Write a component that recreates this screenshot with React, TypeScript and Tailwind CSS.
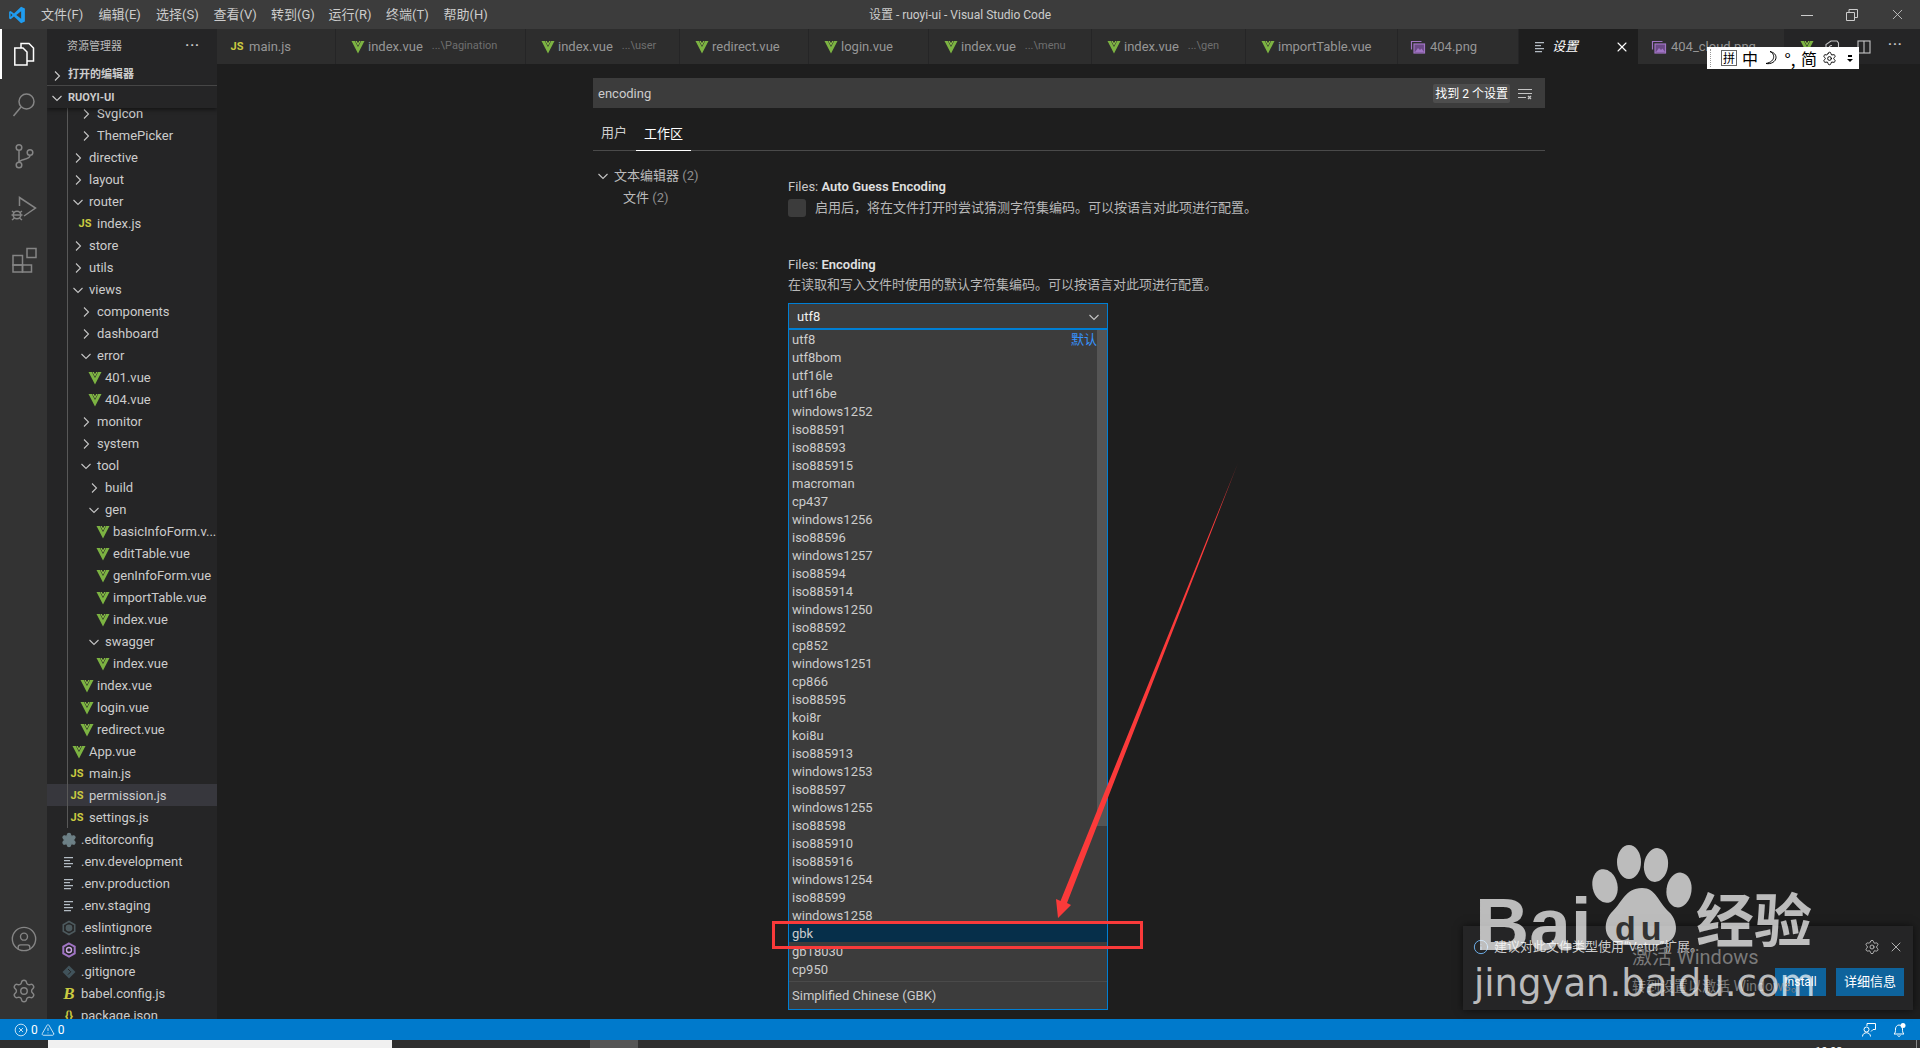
import { CircleUser, CircleX, Info, Settings, TriangleAlert, X } from "lucide-react";

type Kind = "open" | "closed" | "vue" | "js" | "lines" | "gear" | "eslintignore" | "eslint" | "git" | "babel" | "json";

const indent: Record<number, string> = {
  0: "pl-[14px]",
  1: "pl-[22px]",
  2: "pl-[30px]",
  3: "pl-[38px]",
  4: "pl-[46px]",
};

const tree: { name: string; level: number; kind: Kind; active?: boolean }[] = [
  { name: "SvgIcon", level: 2, kind: "closed" },
  { name: "ThemePicker", level: 2, kind: "closed" },
  { name: "directive", level: 1, kind: "closed" },
  { name: "layout", level: 1, kind: "closed" },
  { name: "router", level: 1, kind: "open" },
  { name: "index.js", level: 2, kind: "js" },
  { name: "store", level: 1, kind: "closed" },
  { name: "utils", level: 1, kind: "closed" },
  { name: "views", level: 1, kind: "open" },
  { name: "components", level: 2, kind: "closed" },
  { name: "dashboard", level: 2, kind: "closed" },
  { name: "error", level: 2, kind: "open" },
  { name: "401.vue", level: 3, kind: "vue" },
  { name: "404.vue", level: 3, kind: "vue" },
  { name: "monitor", level: 2, kind: "closed" },
  { name: "system", level: 2, kind: "closed" },
  { name: "tool", level: 2, kind: "open" },
  { name: "build", level: 3, kind: "closed" },
  { name: "gen", level: 3, kind: "open" },
  { name: "basicInfoForm.v...", level: 4, kind: "vue" },
  { name: "editTable.vue", level: 4, kind: "vue" },
  { name: "genInfoForm.vue", level: 4, kind: "vue" },
  { name: "importTable.vue", level: 4, kind: "vue" },
  { name: "index.vue", level: 4, kind: "vue" },
  { name: "swagger", level: 3, kind: "open" },
  { name: "index.vue", level: 4, kind: "vue" },
  { name: "index.vue", level: 2, kind: "vue" },
  { name: "login.vue", level: 2, kind: "vue" },
  { name: "redirect.vue", level: 2, kind: "vue" },
  { name: "App.vue", level: 1, kind: "vue" },
  { name: "main.js", level: 1, kind: "js" },
  { name: "permission.js", level: 1, kind: "js", active: true },
  { name: "settings.js", level: 1, kind: "js" },
  { name: ".editorconfig", level: 0, kind: "gear" },
  { name: ".env.development", level: 0, kind: "lines" },
  { name: ".env.production", level: 0, kind: "lines" },
  { name: ".env.staging", level: 0, kind: "lines" },
  { name: ".eslintignore", level: 0, kind: "eslintignore" },
  { name: ".eslintrc.js", level: 0, kind: "eslint" },
  { name: ".gitignore", level: 0, kind: "git" },
  { name: "babel.config.js", level: 0, kind: "babel" },
  { name: "package.json", level: 0, kind: "json" },
];

const tabs: { name: string; desc?: string; icon: Kind | "image"; width: string }[] = [
  { name: "main.js", icon: "js", width: "w-[119px]" },
  { name: "index.vue", desc: "...\\Pagination", icon: "vue", width: "w-[190px]" },
  { name: "index.vue", desc: "...\\user", icon: "vue", width: "w-[154px]" },
  { name: "redirect.vue", icon: "vue", width: "w-[129px]" },
  { name: "login.vue", icon: "vue", width: "w-[120px]" },
  { name: "index.vue", desc: "...\\menu", icon: "vue", width: "w-[163px]" },
  { name: "index.vue", desc: "...\\gen", icon: "vue", width: "w-[154px]" },
  { name: "importTable.vue", icon: "vue", width: "w-[152px]" },
  { name: "404.png", icon: "image", width: "w-[121px]" },
];

const encodings = [
  "utf8", "utf8bom", "utf16le", "utf16be", "windows1252", "iso88591", "iso88593", "iso885915", "macroman",
  "cp437", "windows1256", "iso88596", "windows1257", "iso88594", "iso885914", "windows1250", "iso88592", "cp852",
  "windows1251", "cp866", "iso88595", "koi8r", "koi8u", "iso885913", "windows1253", "iso88597", "windows1255",
  "iso88598", "iso885910", "iso885916", "windows1254", "iso88599", "windows1258", "gbk", "gb18030", "cp950",
];

const menus = ["文件(F)", "编辑(E)", "选择(S)", "查看(V)", "转到(G)", "运行(R)", "终端(T)", "帮助(H)"];

function Chevron({ open, className = "" }: { open?: boolean; className?: string }) {
  return (
    <svg className={`w-4 h-4 shrink-0 ${className}`} viewBox="0 0 16 16" fill="none" stroke="currentColor" strokeWidth="1.1">
      {open ? <path d="M3.5 6l4.5 4.5L12.5 6" /> : <path d="M6 3.5l4.5 4.5L6 12.5" />}
    </svg>
  );
}

function VueIcon() {
  return (
    <svg className="w-4 h-4 shrink-0 overflow-visible" viewBox="-1.500 0 16 16">
      <path d="M2 2h3.4L8.500 8 11.600 2H15L8.500 14.500z" fill="#7cb342" />
      <path d="M5.900 2h1.400l1.200 2.200L9.700 2h1.400L8.500 6.800z" fill="#8dc149" />
    </svg>
  );
}

function LinesIcon({ className = "text-[#b4bcc4]" }: { className?: string }) {
  return (
    <svg className={`w-4 h-4 shrink-0 ${className}`} viewBox="0 0 16 16" fill="currentColor">
      <path d="M3 3h9v1.300H3zM3 6h6v1.300H3zM3 9h9v1.300H3zM3 12h7v1.300H3z" />
    </svg>
  );
}

function ImageIcon() {
  return (
    <svg className="w-4 h-4 shrink-0" viewBox="0 0 16 16" fill="none" stroke="#a074c4" strokeWidth="1.200">
      <path d="M1.500 10.500V2.500h10" />
      <rect x="4" y="5" width="10.500" height="9" fill="#6b4a85" />
      <path d="M5 13l3-4 2 2 1.500-1.500L14 13z" fill="#a074c4" stroke="none" />
    </svg>
  );
}

function FileIcon({ kind }: { kind: Kind | "image" }) {
  switch (kind) {
    case "open":
      return <Chevron open className="text-[#c5c5c5] translate-x-[1px]" />;
    case "closed":
      return <Chevron className="text-[#c5c5c5] translate-x-[1px]" />;
    case "vue":
      return <VueIcon />;
    case "image":
      return <ImageIcon />;
    case "js":
      return <span className="w-4 shrink-0 text-center text-[11px] font-bold leading-4 text-[#cbcb41]">JS</span>;
    case "lines":
      return <LinesIcon />;
    case "gear":
      return <Settings className="w-4 h-4 shrink-0 text-[#6d8086]" fill="#6d8086" strokeWidth={2} />;
    case "eslintignore":
      return (
        <svg className="w-4 h-4 shrink-0" viewBox="0 0 16 16" fill="none" stroke="#4d5a5e" strokeWidth="1.600">
          <path d="M8 1.500l5.700 3.200v6.600L8 14.500l-5.700-3.200V4.700z" />
          <circle cx="8" cy="8" r="2.600" fill="#4d5a5e" />
        </svg>
      );
    case "eslint":
      return (
        <svg className="w-4 h-4 shrink-0" viewBox="0 0 16 16" fill="none" stroke="#a074c4" strokeWidth="2">
          <path d="M8 1.500l5.700 3.200v6.600L8 14.500l-5.700-3.200V4.700z" />
          <circle cx="8" cy="8" r="2.500" stroke="#c9a8e0" strokeWidth="1.400" />
        </svg>
      );
    case "git":
      return (
        <svg className="w-4 h-4 shrink-0" viewBox="0 0 16 16" fill="#41535b">
          <path d="M8 1.500L14.500 8 8 14.500 1.500 8z" />
          <path d="M7 5l2.800 2.800L7 10.600" stroke="#252526" fill="none" />
        </svg>
      );
    case "babel":
      return <span className="w-4 shrink-0 text-center font-['Liberation_Serif',serif] text-[17px] font-bold italic leading-4 text-[#cbcb41]">B</span>;
    case "json":
      return <span className="w-4 shrink-0 text-center text-[12px] font-bold leading-4 text-[#cbcb41]">{"{}"}</span>;
  }
}

function TreeRow({ row }: { row: (typeof tree)[number] }) {
  return (
    <div className={`h-[22px] shrink-0 pt-[2px] flex items-center gap-1 text-[13px] text-[#cccccc] whitespace-nowrap ${indent[row.level]} ${row.active ? "bg-[#37373d]" : ""}`}>
      <FileIcon kind={row.kind} />
      <span>{row.name}</span>
    </div>
  );
}

function ActivityBar() {
  return (
    <div className="w-[47px] shrink-0 bg-[#333333] flex flex-col text-[#858585]">
      <div className="h-[50px] border-l-2 border-white flex items-center justify-center text-white pr-[1px] -mb-[1px]">
        <svg className="w-6 h-6" viewBox="0 0 24 24" fill="none" stroke="currentColor" strokeWidth="1.500">
          <path d="M9 6V1.500h8L21.500 6v13H15" />
          <path d="M2.800 6H11l4 4v13H2.800z" />
        </svg>
      </div>
      <div className="h-[52px] flex items-center justify-center pt-[1px]">
        <svg className="w-7 h-7" viewBox="0 0 28 28" fill="none" stroke="currentColor" strokeWidth="1.500">
          <circle cx="16.500" cy="10.500" r="7.500" />
          <path d="M11 16L3.500 25" />
        </svg>
      </div>
      <div className="h-[52px] flex items-center justify-center">
        <svg className="w-7 h-7" viewBox="0 0 28 28" fill="none" stroke="currentColor" strokeWidth="1.500">
          <circle cx="9" cy="5.500" r="2.800" />
          <circle cx="9" cy="23" r="2.800" />
          <circle cx="20" cy="10.500" r="2.800" />
          <path d="M9 8.500v11.500M20 13.500c0 4.500-11 3.500-11 7" />
        </svg>
      </div>
      <div className="h-[52px] flex items-center justify-center pt-[1px]">
        <svg className="w-7 h-7" viewBox="0 0 28 28" fill="none" stroke="currentColor" strokeWidth="1.500">
          <path d="M9.500 11V2.500L25.500 13l-11.500 8" />
          <circle cx="7" cy="20" r="3.800" />
          <path d="M2 16l2.500 2M12 16l-2.500 2M1.500 20h2M10.500 20h2M2 25l2.500-2M12 25l-2.500-2M3.500 20h7" />
        </svg>
      </div>
      <div className="h-[52px] flex items-center justify-center">
        <svg className="w-7 h-7" viewBox="0 0 28 28" fill="none" stroke="currentColor" strokeWidth="1.500">
          <rect x="3" y="9.500" width="9.500" height="9.500" />
          <rect x="3" y="19" width="9.500" height="7" />
          <rect x="12.500" y="19" width="9" height="7" />
          <rect x="17" y="2.500" width="9" height="9" />
        </svg>
      </div>
      <div className="mt-auto flex flex-col items-center gap-[25px] pb-[15px]">
        <CircleUser className="w-[28px] h-[28px]" strokeWidth={1.200} />
        <Settings className="w-[26px] h-[26px]" strokeWidth={1.300} />
      </div>
    </div>
  );
}

function Sidebar() {
  return (
    <div className="relative w-[170px] shrink-0 bg-[#252526] flex flex-col overflow-hidden">
      <div className="h-[35px] shrink-0 pt-[2px] pl-[20px] pr-[17px] flex items-center justify-between text-[11px] text-[#bbbbbb]">
        <span>资源管理器</span>
        <span className="text-[13px] font-bold tracking-[1px] -mt-[6px] text-[#cccccc]">···</span>
      </div>
      <div className="h-[22px] shrink-0 pt-[2px] flex items-center gap-[3px] pl-[2px] text-[11px] font-bold text-[#cccccc] border-b border-[#4a4a4a]">
        <Chevron />
        <span>打开的编辑器</span>
      </div>
      <div className="relative z-10 h-[22px] shrink-0 pt-[2px] flex items-center gap-[3px] pl-[2px] text-[11px] font-bold text-[#cccccc] bg-[#252526] shadow-[0_2px_4px_rgba(0,0,0,0.45)]">
        <Chevron open />
        <span>RUOYI-UI</span>
      </div>
      <div className="-mt-[6px] flex flex-col">
        {tree.map((row, i) => (
          <TreeRow key={i} row={row} />
        ))}
      </div>
      <div className="absolute left-[20px] top-[79px] h-[720px] w-px bg-[#585858]" />
    </div>
  );
}

function Tab({ tab }: { tab: (typeof tabs)[number] }) {
  return (
    <div className={`${tab.width} shrink-0 h-full bg-[#2d2d2d] border-r border-[#252526] pl-[12px] flex items-center gap-1 text-[13px] text-[#969696] whitespace-nowrap`}>
      <FileIcon kind={tab.icon} />
      <span>{tab.name}</span>
      {tab.desc && <span className="ml-[5px] text-[11px] text-[#6f6f6f]">{tab.desc}</span>}
    </div>
  );
}

function TabBar() {
  return (
    <div className="h-[35px] shrink-0 flex bg-[#252526]">
      {tabs.map((t, i) => (
        <Tab key={i} tab={t} />
      ))}
      <div className="w-[119px] shrink-0 h-full bg-[#1e1e1e] pl-[13px] pr-[8px] flex items-center gap-1 text-[13px] text-white">
        <LinesIcon className="text-[#b4bcc4]" />
        <span className="italic">设置</span>
        <X className="ml-auto w-4 h-4" strokeWidth={1.600} />
      </div>
      <div className="w-[146px] shrink-0 h-full bg-[#2d2d2d] pl-[13px] flex items-center gap-1 text-[13px] text-[#969696] whitespace-nowrap">
        <ImageIcon />
        <span>404_cloud.png</span>
      </div>
      <div className="flex-1 flex items-center pl-[13px] text-[#c5c5c5]">
        <VueIcon />
        <svg className="ml-[11px] w-4 h-4 shrink-0" viewBox="0 0 16 16" fill="none" stroke="currentColor" strokeWidth="1.100">
          <path d="M2 12V5.500L7 2h6l1.500 2v8z" />
          <path d="M8 6.500a3 3 0 1 0 2 5" />
        </svg>
        <svg className="ml-[16px] w-4 h-4 shrink-0" viewBox="0 0 16 16" fill="none" stroke="currentColor" strokeWidth="1.100">
          <rect x="2" y="2" width="12" height="12" />
          <path d="M8 2v12" />
        </svg>
        <span className="ml-[16px] text-[13px] font-bold tracking-[1px] -mt-[6px]">···</span>
      </div>
    </div>
  );
}

function SettingsPane() {
  return (
    <div className="flex-1 bg-[#1e1e1e] pl-[376px] pr-[375px] pt-[14px] min-h-0">
      <div className="h-[30px] bg-[#3c3c3c] pl-[5px] pr-[12px] pt-[1px] flex items-center text-[13px] text-[#cccccc]">
        <span>encoding</span>
        <span className="ml-auto h-[19px] px-[2px] rounded-[2px] bg-[#4d4d4d] flex items-center text-[12px] text-white">找到 2 个设置</span>
        <svg className="ml-[7px] w-4 h-4 text-[#c5c5c5]" viewBox="0 0 16 16" fill="none" stroke="currentColor" strokeWidth="1">
          <path d="M1 3.500h14M1 7.500h14M1 11.500h8" />
          <path d="M11 10l3 3M14 10l-3 3" strokeWidth="1.300" />
        </svg>
      </div>
      <div className="h-[43px] border-b border-[#4a4a4a] flex items-end text-[13px]">
        <span className="pl-[8px] pr-[9px] h-[27px] text-[#d0d0d0]">用户</span>
        <span className="px-[6px] h-[27px] ml-0 text-white border-b-[1px] border-white w-[55px] text-center -mb-[1px]">工作区</span>
      </div>
      <div className="flex">
        <div className="w-[195px] shrink-0 pt-[14px] text-[13px] text-[#bbbbbb]">
          <div className="h-[22px] flex items-center gap-[3px] pl-[2px]">
            <Chevron open className="text-[#c5c5c5]" />
            <span>文本编辑器 <span className="text-[#8f8f8f]">(2)</span></span>
          </div>
          <div className="h-[22px] flex items-center pl-[30px]">
            <span>文件 <span className="text-[#8f8f8f]">(2)</span></span>
          </div>
        </div>
        <div className="flex-1 pt-[26px]">
          <div className="h-[20px] flex items-center text-[13px] text-[#c8c8c8]">
            <span>Files:&nbsp;</span>
            <span className="font-semibold text-[#e0e0e0]">Auto Guess Encoding</span>
          </div>
          <div className="mt-[2px] h-[18px] flex items-center gap-[9px] text-[13px] text-[#b8b8b8]">
            <span className="w-[18px] h-[18px] rounded-[3px] bg-[#3c3c3c]" />
            <span>启用后，将在文件打开时尝试猜测字符集编码。可以按语言对此项进行配置。</span>
          </div>
          <div className="mt-[37px] h-[20px] pt-[1px] flex items-center text-[13px] text-[#c8c8c8]">
            <span>Files:&nbsp;</span>
            <span className="font-semibold text-[#e0e0e0]">Encoding</span>
          </div>
          <div className="mt-[1px] h-[20px] flex items-center text-[13px] text-[#b8b8b8]">
            在读取和写入文件时使用的默认字符集编码。可以按语言对此项进行配置。
          </div>
          <div className="mt-[8px] w-[320px]">
            <div className="h-[27px] pt-[1px] bg-[#3c3c3c] border border-b-2 border-[#007fd4] pl-[8px] pr-[5px] flex items-center justify-between text-[13px] text-[#f0f0f0]">
              <span>utf8</span>
              <Chevron open className="text-[#c5c5c5]" />
            </div>
            <div className="relative bg-[#3c3c3c] border border-t-0 border-[#007fd4] text-[13px] text-[#cccccc]">
              <div className="absolute right-0 top-0 h-[496px] w-[10px] bg-[#555555]" />
              <div className="flex flex-col">
                {encodings.map((e, i) => (
                  <div key={e} className={`h-[18px] pt-[2px] pl-[3px] pr-[10px] flex items-center justify-between ${e === "gbk" ? "relative bg-[#062f4a]" : ""}`}>
                    <span>{e}</span>
                    {i === 0 && <span className="relative text-[#3794ff]">默认</span>}
                  </div>
                ))}
              </div>
              <div className="mt-[3px] h-[28px] border-t border-[#4a4a4a] pl-[3px] flex items-center">Simplified Chinese (GBK)</div>
            </div>
          </div>
        </div>
      </div>
    </div>
  );
}

function Notification() {
  return (
    <div className="absolute left-[1463px] top-[926px] w-[450px] h-[84px] bg-[#252526] shadow-[0_0_8px_rgba(0,0,0,0.6)] pl-[10px] pr-[9px] pt-[10px] text-[13px] text-[#cccccc]">
      <div className="h-[22px] flex items-center gap-[5px]">
        <Info className="w-4 h-4 text-[#75beff]" strokeWidth={1.300} />
        <span>建议对此文件类型使用“Vetur”扩展。</span>
        <Settings className="ml-auto w-4 h-4 text-[#c5c5c5]" strokeWidth={1.300} />
        <X className="ml-[3px] w-4 h-4 text-[#c5c5c5]" strokeWidth={1.300} />
      </div>
      <div className="mt-[10px] h-[28px] flex justify-end gap-[10px] text-white">
        <span className="w-[51px] bg-[#0e639c] flex items-center justify-center text-[12px]">Install</span>
        <span className="w-[68px] bg-[#0e639c] flex items-center justify-center">详细信息</span>
      </div>
    </div>
  );
}

function Annotation() {
  return (
    <>
      <div className="absolute left-[772px] top-[921px] w-[371px] h-[28px] border-[3px] border-[#f93a3a]" />
      <svg className="absolute left-[1050px] top-[460px] w-[195px] h-[465px]" viewBox="1050 460 195 465">
        <defs>
          <linearGradient id="tail" x1="1238" y1="463" x2="1058" y2="918" gradientUnits="userSpaceOnUse">
            <stop offset="0" stopColor="#f93a3a" stopOpacity="0.5" />
            <stop offset="0.12" stopColor="#fb3a3a" />
          </linearGradient>
        </defs>
        <path d="M1238 463L1067 903L1071 905L1058 918L1056 899L1060.500 901z" fill="url(#tail)" />
      </svg>
    </>
  );
}

function ActivationText() {
  return (
    <div className="absolute left-[1632px] top-[942px] text-[#7a7a7a] whitespace-nowrap">
      <div className="text-[20px] leading-[30px]">激活 Windows</div>
      <div className="text-[14px] leading-[20px] mt-[4px]">转到设置以激活 Windows。</div>
    </div>
  );
}

function Watermark() {
  return (
    <div className="absolute inset-0 pointer-events-none text-white/70">
      <span className="absolute left-[1475px] top-[878px] text-[75px] leading-[92px] font-bold font-['Liberation_Sans',sans-serif]">Bai</span>
      <svg className="absolute left-[1585px] top-[840px] w-[110px] h-[110px]" viewBox="0 0 110 110" fill="currentColor">
        <ellipse cx="20" cy="46" rx="12.500" ry="17" transform="rotate(-12 20 46)" />
        <ellipse cx="44" cy="22" rx="12" ry="17" />
        <ellipse cx="71" cy="25" rx="12" ry="17" transform="rotate(8 71 25)" />
        <ellipse cx="94" cy="50" rx="12.500" ry="17.500" transform="rotate(8 94 50)" />
        <path d="M57 48c14 0 16 14 27 24 10 9 12 32-12 33H40c-20-1-24-20-14-32 11-10 14-25 31-25z" />
      </svg>
      <span className="absolute left-[1615px] top-[902px] text-[34px] tracking-[5px] leading-[52px] font-bold font-['Liberation_Sans',sans-serif] text-[#333333]">du</span>
      <span className="absolute left-[1696px] top-[880px] text-[58px] leading-[84px] font-bold">经验</span>
      <span className="absolute left-[1474px] top-[959px] text-[37px] leading-[50px] font-['DejaVu_Sans',sans-serif] whitespace-nowrap">jingyan.baidu.com</span>
    </div>
  );
}

function ImeBar() {
  return (
    <div className="absolute left-[1707px] top-[47px] w-[152px] h-[22px] bg-white text-black flex items-center pl-[3px] text-[16px] font-['Noto_Sans_CJK_SC',sans-serif]">
      <span className="h-[18px] border-l border-dotted border-[#999]" />
      <span className="ml-[10px] w-[16px] h-[16px] border border-[#666] flex items-center justify-center text-[12px] leading-none">拼</span>
      <span className="ml-[5px] leading-none">中</span>
      <svg className="ml-[6px] w-[14px] h-[16px]" viewBox="0 0 14 16" fill="none" stroke="currentColor" strokeWidth="1">
        <path d="M6 1.500c5 2 6 10 -4 12 5 1 10-2 10-6 0-3-2-5-6-6z" />
      </svg>
      <span className="ml-[4px] w-[16px] text-center text-[17px] leading-none">°,</span>
      <span className="ml-[3px] leading-none">简</span>
      <Settings className="ml-[5px] w-[15px] h-[15px]" strokeWidth={1.500} />
      <span className="ml-[10px] flex flex-col items-center gap-[2px]">
        <span className="block w-[4px] h-[2px] bg-black" />
        <span className="block border-x-[3px] border-t-[3px] border-x-transparent border-t-black" />
      </span>
    </div>
  );
}

export default function App() {
  return (
    <div className="relative w-[1920px] h-[1048px] overflow-hidden flex flex-col bg-[#1e1e1e] font-['Roboto','Noto_Sans_CJK_SC',sans-serif]">
      <div className="relative h-[29px] shrink-0 bg-[#3c3c3c] flex items-center text-[13px] text-[#cccccc]">
        <svg className="ml-[8px] w-[18px] h-[18px]" viewBox="0 0 24 24">
          <path d="M17.500 1L8 10 3.500 6.500 1.500 7.500v9l2 1L8 14l9.500 9 5-2.400V3.400z" fill="#1f9cf0" />
          <path d="M17.500 7L11 12l6.500 5z" fill="#3c3c3c" />
          <path d="M3.500 9.500v5L6 12z" fill="#3c3c3c" />
        </svg>
        <div className="ml-[15px] flex">
          {menus.map((m) => (
            <span key={m} className="w-[57.500px] whitespace-nowrap">{m}</span>
          ))}
        </div>
        <span className="absolute left-1/2 -translate-x-1/2 text-[12px]">设置 - ruoyi-ui - Visual Studio Code</span>
        <div className="ml-auto flex items-center gap-[29px] pr-[14px] text-[#cccccc]">
          <svg className="w-4 h-4" viewBox="0 0 16 16" stroke="currentColor"><path d="M2 8.500h12" /></svg>
          <svg className="w-4 h-4" viewBox="0 0 16 16" fill="none" stroke="currentColor"><path d="M2.500 5.500h8v8h-8zM5 5.500v-3h8.500v8h-3" /></svg>
          <X className="w-[17px] h-[17px]" strokeWidth={1.200} />
        </div>
      </div>

      <div className="flex-1 flex min-h-0">
        <ActivityBar />
        <Sidebar />
        <div className="flex-1 flex flex-col min-w-0">
          <TabBar />
          <SettingsPane />
        </div>
      </div>

      <div className="h-[21px] shrink-0 bg-[#007acc] flex items-center text-white text-[12px] pl-[14px]">
        <CircleX className="w-[14px] h-[14px]" strokeWidth={1.300} />
        <span className="ml-[3px]">0</span>
        <TriangleAlert className="ml-[3px] w-[14px] h-[14px]" strokeWidth={1.300} />
        <span className="ml-[3px]">0</span>
        <svg className="ml-auto w-4 h-4" viewBox="0 0 16 16" fill="none" stroke="currentColor">
          <path d="M6 4V1.500h8.500v6H12L10 9.500" />
          <circle cx="5.500" cy="7.500" r="2.500" />
          <path d="M1.500 14.500c0-5 8-5 8 0" />
        </svg>
        <svg className="ml-[14px] mr-[13px] w-4 h-4" viewBox="0 0 16 16" fill="none" stroke="currentColor">
          <path d="M3 12c1.500-1 1.500-3 1.500-5 0-2 1.500-4 3.500-4s3.500 2 3.500 4c0 2 0 4 1.500 5zM6.500 13.500c.5 1 2.500 1 3 0" />
          <circle cx="12" cy="3.500" r="2.500" fill="white" stroke="none" />
        </svg>
      </div>

      <div className="relative h-[8px] shrink-0 bg-[#2f2f2f] flex overflow-hidden">
        <div className="ml-[48px] w-[344px] bg-[#f0f0f0]" />
        <div className="ml-[198px] w-[48px] bg-[#555555]" />
        <span className="absolute left-[1815px] top-[5px] text-[11px] leading-[13px] text-white">10:03</span>
        <div className="absolute right-[3px] top-0 h-full w-px bg-[#888888]" />
      </div>

      <Notification />
      <ActivationText />
      <Watermark />
      <Annotation />
      <ImeBar />
    </div>
  );
}
